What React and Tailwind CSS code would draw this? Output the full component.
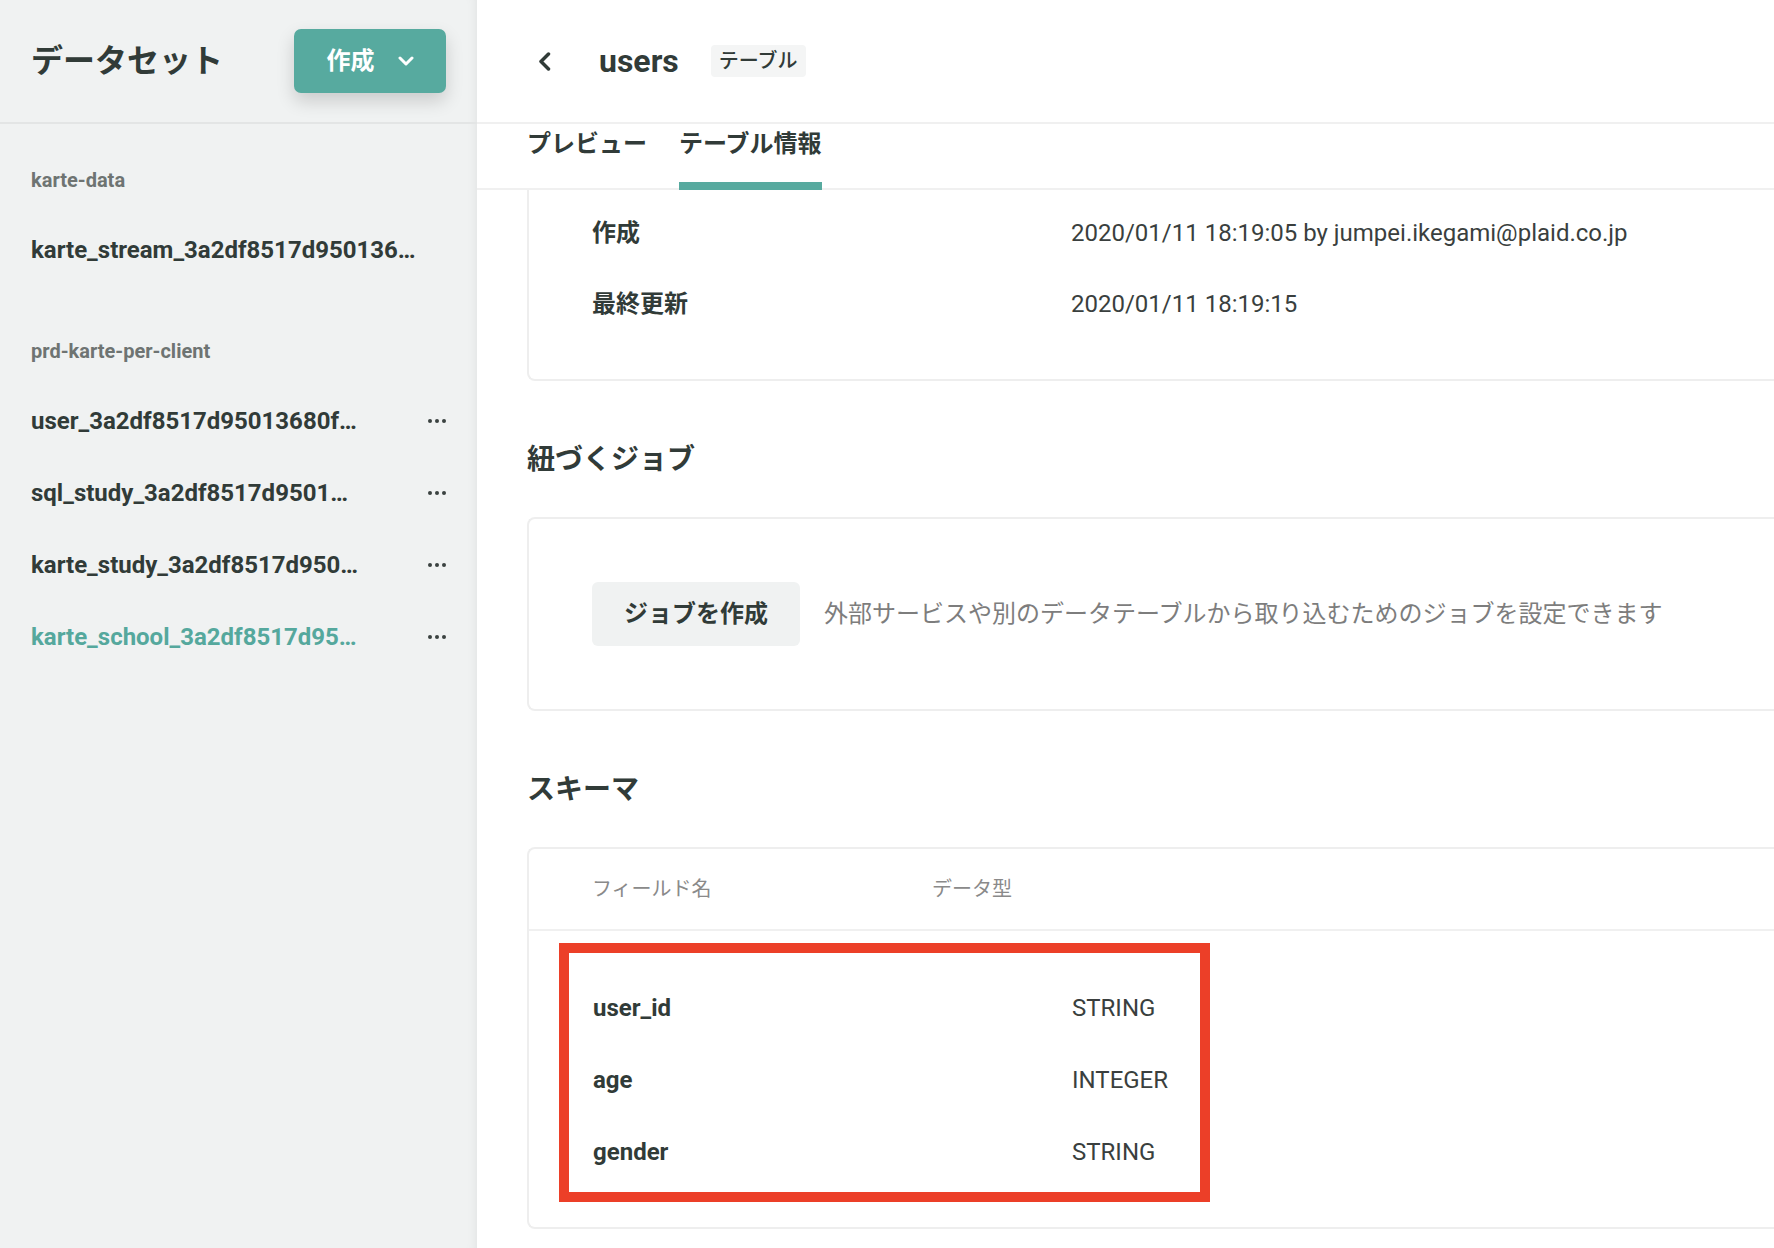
import React, { useState } from 'react';

const datasets = [
  {
    name: 'karte-data',
    tables: [{ id: 'stream', name: 'karte_stream_3a2df8517d950136…', menu: false }],
  },
  {
    name: 'prd-karte-per-client',
    tables: [
      { id: 'user', name: 'user_3a2df8517d95013680f…', menu: true },
      { id: 'sql', name: 'sql_study_3a2df8517d9501…', menu: true },
      { id: 'study', name: 'karte_study_3a2df8517d950…', menu: true },
      { id: 'school', name: 'karte_school_3a2df8517d95…', menu: true },
    ],
  },
];

const tableInfo = [
  { label: '作成', value: '2020/01/11 18:19:05 by jumpei.ikegami@plaid.co.jp' },
  { label: '最終更新', value: '2020/01/11 18:19:15' },
];

const schema = [
  { field: 'user_id', type: 'STRING' },
  { field: 'age', type: 'INTEGER' },
  { field: 'gender', type: 'STRING' },
];

const Dots = () => (
  <div className="flex items-center gap-[3px]">
    <span className="w-[4px] h-[4px] rounded-full bg-[#3a4240]" />
    <span className="w-[4px] h-[4px] rounded-full bg-[#3a4240]" />
    <span className="w-[4px] h-[4px] rounded-full bg-[#3a4240]" />
  </div>
);

const Sidebar = ({ activeId }) => (
  <aside className="w-[477px] shrink-0 h-full bg-[#f0f2f2] shadow-[inset_-10px_0_12px_-10px_rgba(0,0,0,0.08)]">
    <div className="h-[124px] border-b-2 border-[#e3e5e5] pl-[31px] pr-[31px] flex items-center justify-between">
      <h1 className="text-[32px] leading-[40px] font-bold text-[#313b38]">データセット</h1>
      <button className="w-[152px] h-[64px] rounded-[7px] bg-[#57aa9f] text-white flex items-center justify-center gap-[23px] shadow-[0_8px_18px_rgba(0,0,0,0.16)]">
        <span className="text-[24px] leading-[32px] font-bold">作成</span>
        <svg width="16" height="10" viewBox="0 0 16 10" fill="none">
          <polyline points="2,2 8,8 14,2" stroke="white" strokeWidth="3" strokeLinecap="round" strokeLinejoin="round" />
        </svg>
      </button>
    </div>

    <div className="pt-[36px]">
      {datasets.map((ds, i) => (
        <div key={ds.name} className={i > 0 ? 'mt-[45px]' : ''}>
          <div className="h-[40px] mb-[14px] px-[31px] flex items-center text-[20px] font-bold text-[#6e7472]">
            {ds.name}
          </div>
          {ds.tables.map((t) => (
            <div key={t.id} className="h-[72px] pl-[31px] pr-[31px] flex items-center justify-between">
              <span
                className={`truncate text-[24px] leading-[32px] font-bold ${
                  t.id === activeId ? 'text-[#55a89d]' : 'text-[#313b38]'
                }`}
              >
                {t.name}
              </span>
              {t.menu && <Dots />}
            </div>
          ))}
        </div>
      ))}
    </div>
  </aside>
);

const Card = ({ children, className = '' }) => (
  <div className={`border-2 border-r-0 border-[#eeeeee] bg-white ${className}`}>{children}</div>
);

const SectionTitle = ({ children }) => (
  <h2 className="mt-[59px] h-[40px] flex items-center text-[28px] leading-[40px] font-bold text-[#313b38]">
    {children}
  </h2>
);

const App = () => {
  const [tab, setTab] = useState('info');
  const tabs = [
    { id: 'preview', label: 'プレビュー' },
    { id: 'info', label: 'テーブル情報' },
  ];

  return (
    <div className="flex w-full h-screen overflow-hidden bg-white text-[#313b38] font-[Roboto,'Noto_Sans_CJK_JP',sans-serif]">
      <Sidebar activeId="school" />

      <main className="flex-1 min-w-0 h-full flex flex-col">
        {/* Header */}
        <div className="h-[124px] shrink-0 border-b-2 border-[#f0f0f0] pl-[61px] flex items-center">
          <svg width="13" height="19" viewBox="0 0 13 19" fill="none">
            <polyline points="10.5,2 3,9.5 10.5,17" stroke="#313b38" strokeWidth="3.5" strokeLinecap="round" strokeLinejoin="round" />
          </svg>
          <span className="ml-[48px] text-[32px] leading-[40px] font-bold">users</span>
          <span className="ml-[32px] h-[32px] px-[8px] rounded-[4px] bg-[#f4f5f5] flex items-center text-[20px] leading-[28px] font-medium">
            テーブル
          </span>
        </div>

        {/* Tabs */}
        <div className="h-[66px] shrink-0 border-b-2 border-[#f0f0f0] pl-[50px] flex gap-[32px]">
          {tabs.map((t) => (
            <button key={t.id} onClick={() => setTab(t.id)} className="h-full flex flex-col justify-between">
              <span className="mt-[4px] text-[24px] leading-[32px] font-bold text-[#313b38]">{t.label}</span>
              <span className={`h-[8px] -mb-[2px] w-full ${tab === t.id ? 'bg-[#57aa9f]' : 'bg-transparent'}`} />
            </button>
          ))}
        </div>

        {/* Content */}
        <div className="flex-1 min-h-0 overflow-hidden pl-[50px]">
          <Card className="border-t-0 rounded-bl-[8px] pt-[7px] pb-[40px]">
            {tableInfo.map((row) => (
              <div key={row.label} className="h-[71px] pl-[63px] flex items-center">
                <span className="w-[479px] shrink-0 text-[24px] leading-[32px] font-bold">{row.label}</span>
                <span className="text-[24px] leading-[32px] text-[#3a3f3e]">{row.value}</span>
              </div>
            ))}
          </Card>

          <SectionTitle>紐づくジョブ</SectionTitle>
          <Card className="mt-[37px] rounded-l-[8px] py-[63px] pl-[63px] flex items-center">
            <button className="h-[64px] px-[32px] rounded-[6px] bg-[#f0f2f2] text-[24px] leading-[32px] font-bold text-[#313b38]">
              ジョブを作成
            </button>
            <span className="ml-[24px] text-[24px] leading-[32px] text-[#7d7d7d]">
              外部サービスや別のデータテーブルから取り込むためのジョブを設定できます
            </span>
          </Card>

          <SectionTitle>スキーマ</SectionTitle>
          <Card className="mt-[37px] rounded-l-[8px] pb-[25px]">
            <div className="h-[82px] border-b-2 border-[#f0f0f0] pl-[63px] flex items-center text-[20px] leading-[28px] text-[#8a8a8a]">
              <span className="w-[340px] shrink-0">フィールド名</span>
              <span>データ型</span>
            </div>
            <div className="mt-[12px] ml-[30px] w-[651px] border-[10px] border-[#ec3f28] pt-[19px] pb-[4px]">
              {schema.map((col) => (
                <div key={col.field} className="h-[72px] pl-[24px] flex items-center">
                  <span className="w-[479px] shrink-0 text-[24px] leading-[32px] font-bold">{col.field}</span>
                  <span className="text-[24px] leading-[32px] text-[#3a3f3e]">{col.type}</span>
                </div>
              ))}
            </div>
          </Card>
        </div>
      </main>
    </div>
  );
};

export default App;
